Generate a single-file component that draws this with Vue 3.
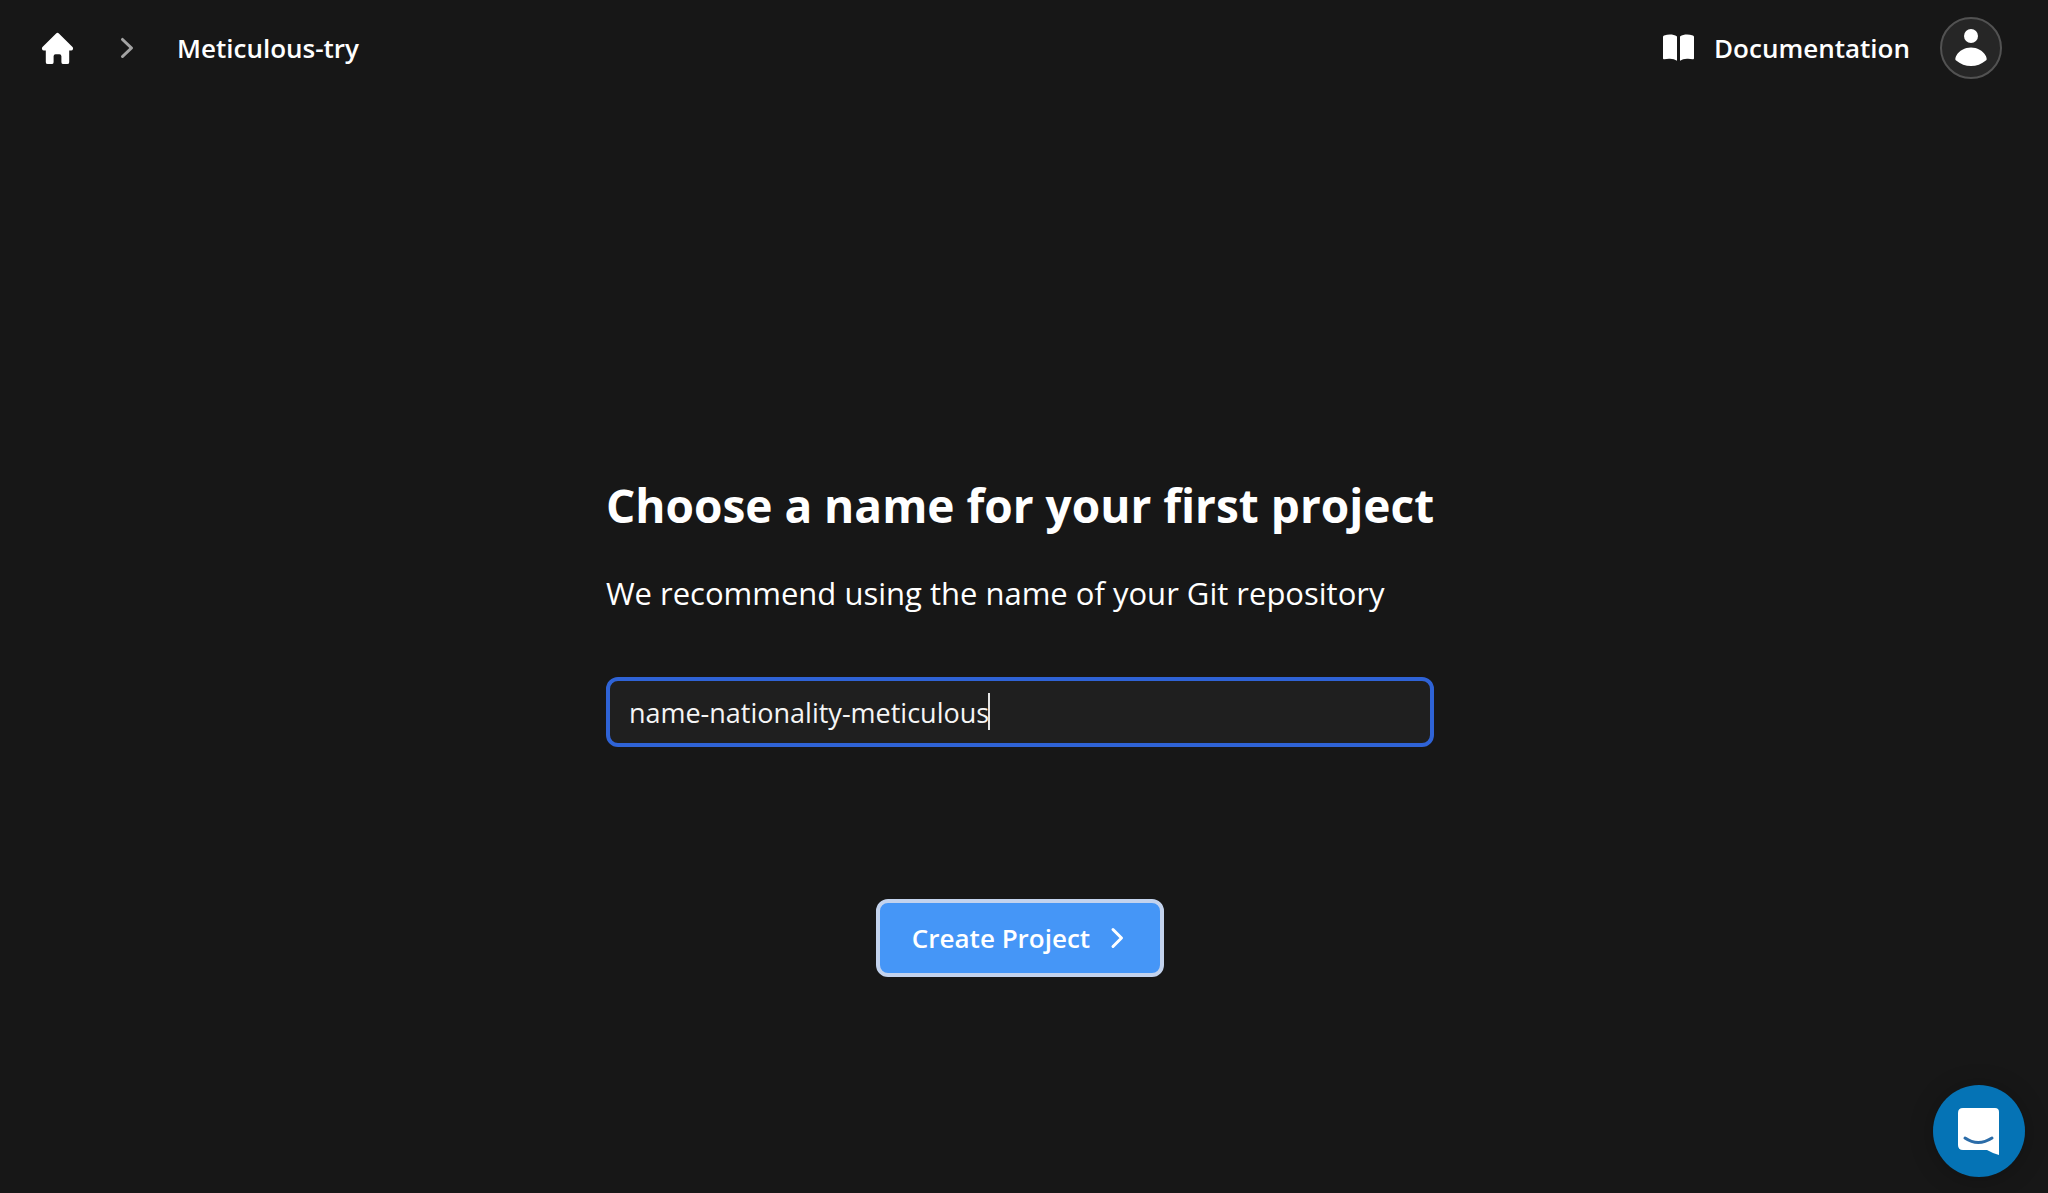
<script setup>
import { ref } from 'vue'

const projectName = ref('name-nationality-meticulous')
</script>

<template>
  <div class="page">
    <header class="topbar">
      <nav class="crumbs" aria-label="Breadcrumb">
        <a href="#" class="home" aria-label="Home">
          <svg width="39" height="39" viewBox="0 0 20 20" fill="currentColor" aria-hidden="true">
            <path d="M9.293 2.293a1 1 0 011.414 0l7 7A1 1 0 0117 11h-1v6a1 1 0 01-1 1h-2a1 1 0 01-1-1v-3a1 1 0 00-1-1H9a1 1 0 00-1 1v3a1 1 0 01-1 1H5a1 1 0 01-1-1v-6H3a1 1 0 01-.707-1.707l7-7z" />
          </svg>
        </a>
        <svg class="divider" width="40" height="40" viewBox="0 0 20 20" fill="currentColor" aria-hidden="true">
          <path fill-rule="evenodd" d="M7.21 14.77a.75.75 0 01.02-1.06L11.168 10 7.23 6.29a.75.75 0 111.04-1.08l4.5 4.25a.75.75 0 010 1.08l-4.5 4.25a.75.75 0 01-1.06-.02z" />
        </svg>
        <a href="#" class="crumb">Meticulous-try</a>
      </nav>
      <div class="actions">
        <a href="#" class="docs">
          <svg width="31" height="28" viewBox="0 0 31 28" fill="currentColor" aria-hidden="true">
            <path d="M14 2.400C12 1.200 9.500 .6 7 .6C5 .6 3 .9 1.100 1.500Q0 1.900 0 3V24.200Q0 25.600 1.200 25.300C3 24.900 5 24.700 7 24.800C9.800 24.900 12 25.500 14 26.800Z" />
            <path d="M17 2.400C19 1.200 21.500 .6 24 .6C26 .6 28 .9 29.900 1.500Q31 1.900 31 3V24.200Q31 25.600 29.800 25.300C28 24.900 26 24.700 24 24.800C21.200 24.900 19 25.500 17 26.800Z" />
          </svg>
          Documentation
        </a>
        <button type="button" class="avatar" aria-label="Account">
          <svg width="32" height="38" viewBox="0 0 32 38" fill="currentColor" aria-hidden="true">
            <circle cx="16" cy="7" r="7" />
            <path d="M.8 31.200C-.2 30.600 .6 28 1.300 26.700C4.300 21.500 9.800 18.500 16 18.500S27.700 21.500 30.700 26.700C31.400 28 32.200 30.600 31.200 31.200C26.500 35.200 21.400 37 16 37S5.500 35.200 .8 31.200Z" />
          </svg>
        </button>
      </div>
    </header>

    <main class="content">
      <form class="project" @submit.prevent>
        <h1>Choose a name for your first project</h1>
        <label class="hint" for="project-name">We recommend using the name of your Git repository</label>
        <div class="field">
          <input id="project-name" v-model="projectName" type="text" autocomplete="off" spellcheck="false" />
          <span class="caret" aria-hidden="true"></span>
        </div>
        <button type="submit" class="create">
          Create Project
          <svg width="24" height="24" viewBox="0 0 24 24" fill="none" stroke="currentColor" stroke-width="3" stroke-linecap="round" stroke-linejoin="round" aria-hidden="true">
            <path d="M9 3.500L17.500 12L9 20.500" />
          </svg>
        </button>
      </form>
    </main>

    <button type="button" class="messenger" aria-label="Open messenger">
      <svg width="42" height="48" viewBox="0 -1 42 48" aria-hidden="true">
        <path fill="#fff" d="M5 0H37Q41 0 41 4V47Q35 45.500 29 42H5Q0 42 0 37V5Q0 0 5 0Z" />
        <path fill="none" stroke="#2b6ca8" stroke-width="3" stroke-linecap="round" d="M7 30Q20 39 34 30" />
      </svg>
    </button>
  </div>
</template>

<style>
body {
  margin: 0;
  background: #171717;
}
</style>

<style scoped>
.page {
  display: flex;
  flex-direction: column;
  box-sizing: border-box;
  min-height: 100vh;
  color: #fff;
  background: #171717;
  font-family: "Open Sans", "Noto Sans", sans-serif;
  font-size: 26px;
  line-height: 40px;
}

a {
  color: inherit;
  text-decoration: none;
}

button {
  color: inherit;
  font: inherit;
  cursor: pointer;
}

svg {
  display: block;
  flex: none;
}

.topbar {
  display: flex;
  align-items: center;
  justify-content: space-between;
  height: 96px;
  padding: 0 46px 0 38px;
  font-weight: 600;
}

.crumbs,
.actions,
.docs {
  display: flex;
  align-items: center;
}

.crumbs {
  gap: 30px;
}

.divider {
  color: #a3a3a3;
}

.actions {
  gap: 30px;
}

.docs {
  gap: 20px;
}

.avatar {
  display: flex;
  align-items: center;
  justify-content: center;
  box-sizing: border-box;
  width: 62px;
  height: 62px;
  padding: 0;
  border: 2px solid #525252;
  border-radius: 50%;
  background: #262626;
}

.content {
  display: flex;
  flex: 1;
  align-items: center;
  justify-content: center;
  padding: 161px 8px 0 0;
}

.project {
  display: flex;
  flex-direction: column;
}

h1 {
  margin: 0;
  font-size: 46px;
  font-weight: 700;
  line-height: 64px;
}

.hint {
  margin-top: 32px;
  font-size: 31px;
  line-height: 48px;
}

.field {
  position: relative;
  margin-top: 60px;
}

input {
  display: block;
  box-sizing: border-box;
  width: 100%;
  height: 70px;
  padding: 0 19px;
  border: 4px solid #2f63d6;
  border-radius: 12px;
  outline: none;
  color: #f5f5f5;
  background: #1f1f1f;
  font: inherit;
  font-size: 27px;
}

.caret {
  position: absolute;
  top: 16px;
  left: 382px;
  width: 2px;
  height: 37px;
  background: #e5e5e5;
}

.create {
  display: flex;
  align-items: center;
  align-self: center;
  gap: 14px;
  box-sizing: border-box;
  height: 78px;
  margin-top: 152px;
  padding: 0 32px;
  border: 4px solid #c3d3ee;
  border-radius: 12px;
  background: #4596f7;
  font-weight: 600;
}

.messenger {
  position: fixed;
  right: 23px;
  bottom: 16px;
  display: flex;
  align-items: center;
  justify-content: center;
  width: 92px;
  height: 92px;
  padding: 0;
  border: 0;
  border-radius: 50%;
  background: #0573b5;
  box-shadow: 0 2px 24px rgba(0, 0, 0, 0.24);
}
</style>
